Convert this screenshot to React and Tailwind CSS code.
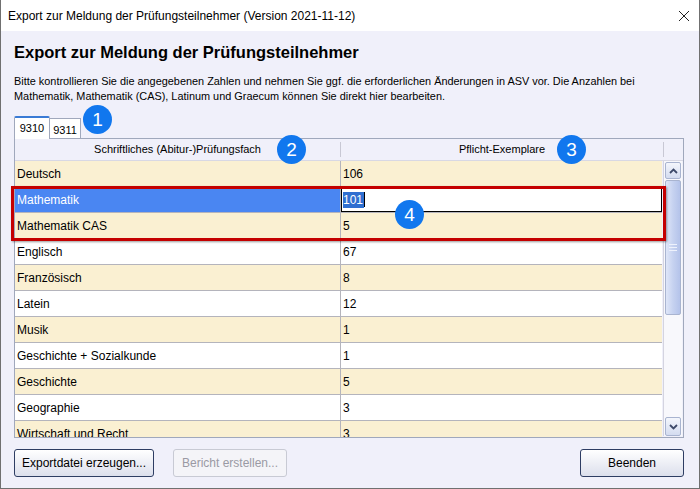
import React from "react";

const rows = [
  { name: "Deutsch", count: "106" },
  { name: "Mathematik", count: "101" },
  { name: "Mathematik CAS", count: "5" },
  { name: "Englisch", count: "67" },
  { name: "Französisch", count: "8" },
  { name: "Latein", count: "12" },
  { name: "Musik", count: "1" },
  { name: "Geschichte + Sozialkunde", count: "1" },
  { name: "Geschichte", count: "5" },
  { name: "Geographie", count: "3" },
  { name: "Wirtschaft und Recht", count: "3" },
];

const Badge = ({ n, className }) => (
  <div
    className={`absolute flex items-center justify-center w-[29px] h-[29px] rounded-full bg-[#1177ee] text-white text-[19px] leading-none ${className}`}>
    {n}
  </div>
);

const WinButton = ({ children, disabled, className }) => (
  <button
    className={`h-[28px] rounded-[3px] border text-[12px] ${
      disabled
        ? "border-[#c8cad4] bg-[#f4f4f8] text-[#9a9aa4]"
        : "border-[#2e3d63] bg-gradient-to-b from-white to-[#dcdfec] text-black"
    } ${className}`}>
    {children}
  </button>
);

const Chevron = ({ down }) => (
  <svg width="9" height="6" viewBox="0 0 9 6">
    <path
      d={down ? "M1 1 L4.5 4.5 L8 1" : "M1 5 L4.5 1.5 L8 5"}
      stroke="#3e4a6a"
      strokeWidth="1.8"
      fill="none"
    />
  </svg>
);

const App = () => {
  return (
    <div
      className="w-[700px] h-[489px] flex flex-col bg-[#f0f0fa] border-l border-r border-b border-[#707070] overflow-hidden"
      style={{ fontFamily: '"Liberation Sans", Arial, sans-serif' }}>
      {/* title bar */}
      <div className="h-[31px] bg-white flex items-center justify-between pl-[7px] pr-[9px] shrink-0">
        <span className="text-[12px] text-black">
          Export zur Meldung der Prüfungsteilnehmer (Version 2021-11-12)
        </span>
        <svg width="12" height="12" viewBox="0 0 12 12">
          <path d="M1 1 L11 11 M11 1 L1 11" stroke="#222" strokeWidth="1" />
        </svg>
      </div>

      <div className="flex flex-col px-[13px] pr-[15px]">
        <h1 className="text-[16.5px] font-bold text-black mt-[11px] leading-[20px]">
          Export zur Meldung der Prüfungsteilnehmer
        </h1>
        <p className="text-[10.9px] leading-[15px] text-black mt-[12px]">
          Bitte kontrollieren Sie die angegebenen Zahlen und nehmen Sie ggf. die erforderlichen Änderungen in ASV vor. Die Anzahlen bei
          <br />
          Mathematik, Mathematik (CAS), Latinum und Graecum können Sie direkt hier bearbeiten.
        </p>

        {/* tabs */}
        <div className="relative flex items-end mt-[11px] h-[23px]">
          <div className="h-[23px] w-[36px] bg-white border border-b-0 border-[#a0a8bc] border-t-2 border-t-[#3a7bd5] rounded-t-[2px] text-[11px] flex items-start justify-center pt-[2px] z-10 -mb-px">
            9310
          </div>
          <div className="h-[20px] w-[31px] bg-white border border-l-0 border-b-0 border-[#a0a8bc] text-[11px] flex items-center justify-center pt-[3px]">
            9311
          </div>
          <Badge n="1" className="left-[69px] top-[-10px]" />
        </div>

        {/* table */}
        <div className="relative h-[300px] border border-[#a0a8bc] bg-[#f0f0fa] flex flex-col">
          <div className="h-[22px] flex border-b border-[#d8d8e4] text-[11px] text-black shrink-0">
            <div className="w-[326px] flex items-center justify-center border-r border-[#c8c8d4] my-[3px]">
              Schriftliches (Abitur-)Prüfungsfach
            </div>
            <div className="w-[323px] flex items-center justify-center border-r border-[#c8c8d4] my-[3px]">
              Pflicht-Exemplare
            </div>
          </div>
          <div className="flex flex-1 overflow-hidden">
            <div className="w-[650px] overflow-hidden">
              {rows.map((r, i) => {
                const cream = i % 2 === 0;
                const selected = i === 1;
                return (
                  <div
                    key={r.name}
                    className={`h-[26px] flex border-b border-[#b4b4bc] text-[12px] ${
                      cream ? "bg-[#faf0d2]" : "bg-white"
                    }`}>
                    <div
                      className={`w-[326px] pl-[2px] flex items-center border-r border-[#b4b4bc] ${
                        selected ? "bg-[#4a86f2] text-white" : "text-black"
                      }`}>
                      {r.name}
                    </div>
                    {selected ? (
                      <div className="flex-1 flex items-center bg-white border border-black pl-px">
                        <span className="bg-[#2f6fd0] text-white pr-px leading-[16px]">{r.count}</span>
                        <span className="w-px h-[15px] bg-black" />
                      </div>
                    ) : (
                      <div className="flex-1 pl-[2px] flex items-center text-black">{r.count}</div>
                    )}
                  </div>
                );
              })}
            </div>
            {/* scrollbar */}
            <div className="w-[19px] mx-[1px] flex flex-col bg-[#f8f8fc] border-l border-[#d4d4e0] mb-[1px]">
              <div className="h-[17px] mt-[1px] mx-[1px] rounded-[2px] border border-[#a9b4d0] bg-gradient-to-b from-[#f4f6fc] to-[#d4dcf0] flex items-center justify-center">
                <Chevron />
              </div>
              <div className="h-[135px] mt-[1px] mx-[1px] rounded-[2px] border border-[#a9b4d0] bg-gradient-to-r from-[#dfe6f8] via-[#c6d2f0] to-[#b4c3ea] flex items-center justify-center">
                <div className="flex flex-col gap-[2px]">
                  <div className="w-[8px] h-px bg-[#eef2fc]" />
                  <div className="w-[8px] h-px bg-[#eef2fc]" />
                  <div className="w-[8px] h-px bg-[#eef2fc]" />
                </div>
              </div>
              <div className="flex-1" />
              <div className="h-[19px] mx-[1px] rounded-[2px] border border-[#a9b4d0] bg-gradient-to-b from-[#f4f6fc] to-[#d4dcf0] flex items-center justify-center">
                <Chevron down />
              </div>
            </div>
          </div>

          {/* highlight box around math rows */}
          <div className="absolute left-[-4px] top-[47px] w-[655px] h-[55px] border-[3px] border-[#c40000] shadow-[1px_1px_2px_rgba(0,0,0,0.4)] pointer-events-none" />

          <Badge n="2" className="left-[262px] top-[-4px]" />
          <Badge n="3" className="left-[542px] top-[-4px]" />
          <Badge n="4" className="left-[380px] top-[61px]" />
        </div>

        {/* buttons */}
        <div className="flex items-center mt-[11px]">
          <WinButton className="w-[140px]">Exportdatei erzeugen...</WinButton>
          <WinButton disabled className="w-[114px] ml-[19px]">
            Bericht erstellen...
          </WinButton>
          <div className="flex-1" />
          <WinButton className="w-[104px]">Beenden</WinButton>
        </div>
      </div>
    </div>
  );
};

export default App;
